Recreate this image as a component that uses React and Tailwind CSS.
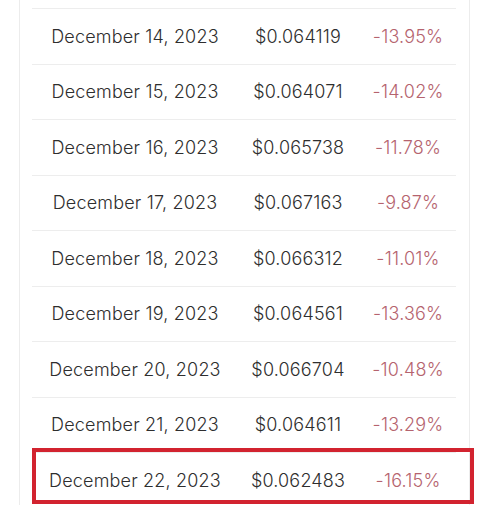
import React from 'react';

const rows = [
  { date: 'December 14, 2023', price: '$0.064119', change: '-13.95%' },
  { date: 'December 15, 2023', price: '$0.064071', change: '-14.02%' },
  { date: 'December 16, 2023', price: '$0.065738', change: '-11.78%' },
  { date: 'December 17, 2023', price: '$0.067163', change: '-9.87%' },
  { date: 'December 18, 2023', price: '$0.066312', change: '-11.01%' },
  { date: 'December 19, 2023', price: '$0.064561', change: '-13.36%' },
  { date: 'December 20, 2023', price: '$0.066704', change: '-10.48%' },
  { date: 'December 21, 2023', price: '$0.064611', change: '-13.29%' },
  { date: 'December 22, 2023', price: '$0.062483', change: '-16.15%', highlight: true },
];

export default function App() {
  return (
    <div className="h-[505px] w-[500px] overflow-hidden bg-white" style={{ fontFamily: 'Inter, "Noto Sans", sans-serif' }}>
      {/* Card with side borders */}
      <div className="ml-[19px] w-[451px] h-full border-x border-[#ececec] pl-[12px] pr-[13px] pt-[8px]">
        <div className="flex flex-col">
          {rows.map((row) => (
            <div
              key={row.date}
              className="relative grid grid-cols-[206px_120px_100px] h-[55.5px] items-center border-t border-[#ededed] text-[18px] font-light text-[#2e2e2e] tracking-[0.01em]"
            >
              <div className="text-center">{row.date}</div>
              <div className="text-center">{row.price}</div>
              <div className="text-center text-[#b5636e]">{row.change}</div>
              {row.highlight && (
                <div className="absolute left-0 -right-[18px] -top-[5px] h-[56px] border-[4px] border-[#d2232f]" />
              )}
            </div>
          ))}
        </div>
      </div>
    </div>
  );
}
